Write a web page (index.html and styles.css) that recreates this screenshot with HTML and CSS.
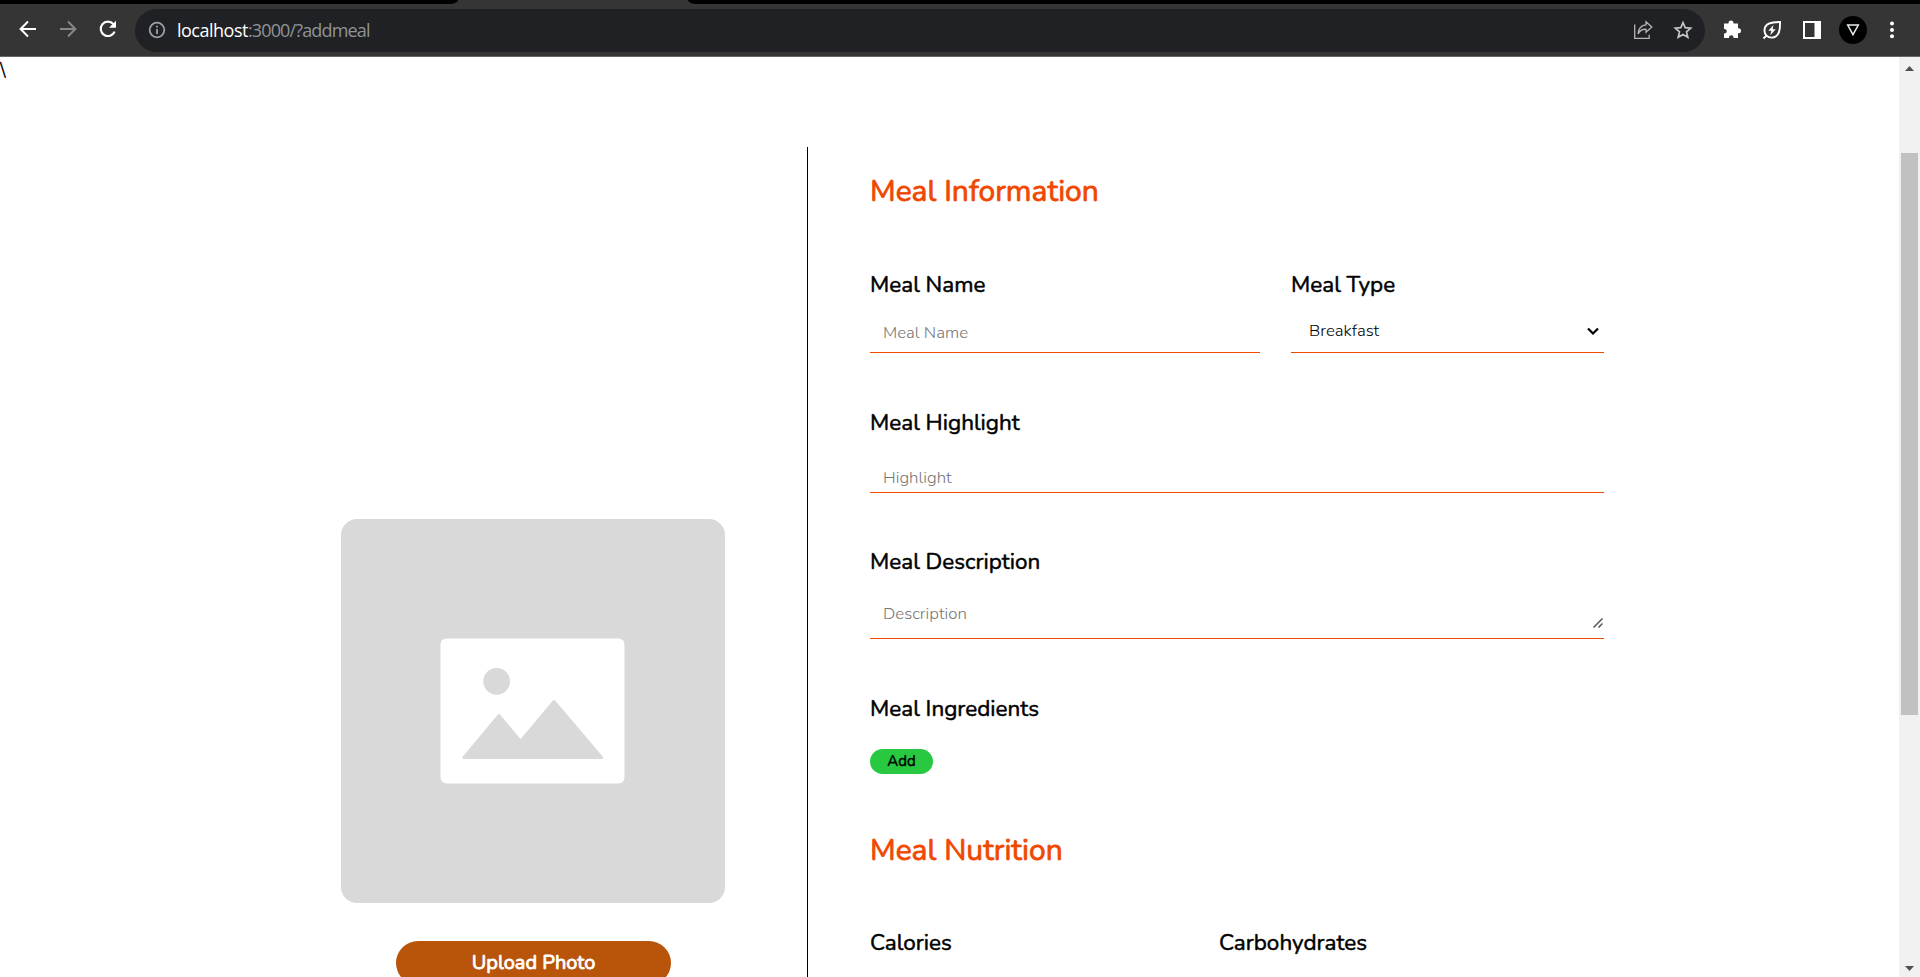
FILE: index.html
```html
<!DOCTYPE html>
<html lang="en">
<head>
<meta charset="utf-8">
<title>Add Meal</title>
<link rel="stylesheet" href="styles.css">
</head>
<body>
<div class="tabstrip"><span class="tab-left"></span><span class="tab-active"></span><span class="tab-right"></span></div>
<header class="toolbar">
  <svg class="nav" viewBox="0 0 20 20"><path d="M18 10H3M10 2.5 2.6 10l7.4 7.5" fill="none" stroke="#fff" stroke-width="2"/></svg>
  <svg class="nav" viewBox="0 0 20 20"><path d="M2 10h15M10 2.5l7.4 7.5-7.4 7.5" fill="none" stroke="#888" stroke-width="2"/></svg>
  <svg class="nav" viewBox="0 0 20 20"><path d="M16.6 12.6A7.2 7.2 0 1 1 15.3 5" fill="none" stroke="#fff" stroke-width="2.1"/><path d="M18 1.8v7h-7z" fill="#fff"/></svg>
  <div class="address">
    <svg class="info" viewBox="0 0 18 18"><circle cx="9" cy="9" r="7.3" fill="none" stroke="#9aa0a6" stroke-width="1.8"/><path d="M9 8v5M9 4.8v1.8" stroke="#9aa0a6" stroke-width="1.8"/></svg>
    <span class="url"><b>localhost</b>:3000/?addmeal</span>
    <svg class="share" viewBox="0 0 20 20"><path d="M1.7 4.5v13.8h14.5v-3.6" fill="none" stroke="#b5b5b5" stroke-width="1.3"/><path d="M13 1.8 18.8 7 13 12.2V9.3C9.500 9 7 10.500 5 13.800 5.500 8.500 8.500 5.300 13 4.900z" fill="none" stroke="#b5b5b5" stroke-width="1.3"/></svg>
    <svg class="star" viewBox="0 0 20 20"><path d="M10 2.600 12.200 7.700 17.700 8.200 13.500 11.900 14.800 17.300 10 14.400 5.200 17.300 6.500 11.900 2.300 8.200 7.800 7.700z" fill="none" stroke="#c4c4c4" stroke-width="1.700"/></svg>
  </div>
  <svg class="ext" viewBox="0 0 20 20"><path d="M2 3.500h4.500V3a2.500 2.500 0 1 1 5 0v.5h4.500v4.700h.5a2.500 2.500 0 1 1 0 5H16V18h-4.500v-.5a2.200 2.200 0 0 0-4.500 0v.5H2v-4.500h.5a2.200 2.200 0 0 0 0-4.500H2z" fill="#fff"/></svg>
  <svg class="ext" viewBox="0 0 20 20"><path d="M18 2c.3 7-.6 15.600-8.300 15.600A7 7 0 0 1 2.500 10.400C2.500 4 9 1.800 18 2zM1.500 18.500l3.200-3.200" fill="none" stroke="#fff" stroke-width="1.900"/><path d="M11.500 5 6.300 10.700h3l-1 4.500 5.400-6h-3.100z" fill="#fff"/></svg>
  <svg class="ext" viewBox="0 0 20 20"><path d="M2 2h16v16H2z" fill="none" stroke="#fff" stroke-width="2"/><path d="M12.500 2H18v16h-5.500z" fill="#fff"/></svg>
  <svg class="avatar" viewBox="0 0 28 28"><circle cx="14" cy="14" r="14"/><path d="M8.700 9h10.600L14 18.600z" fill="none" stroke="#e8eef0" stroke-width="1.500"/></svg>
  <svg class="more" viewBox="0 0 6 20"><g fill="#fff"><circle cx="3" cy="3.600" r="2"/><circle cx="3" cy="10" r="2"/><circle cx="3" cy="16.200" r="2"/></g></svg>
</header>
<main class="viewport">
  <div class="page">
    <div class="stray">\</div>
    <div class="columns">
      <section class="photo">
        <svg class="placeholder" viewBox="0 0 384 384"><rect width="384" height="384" rx="16" fill="#d9d9d9"/><rect x="99.500" y="119.500" width="184" height="145" rx="6" fill="#fff"/><circle cx="155.700" cy="162.300" r="13.400" fill="#d9d9d9"/><path d="m123 238.500 35-42 21.500 26 33.500-40 47.500 56z" fill="#d9d9d9" stroke="#d9d9d9" stroke-width="3" stroke-linejoin="round"/></svg>
        <button class="upload">Upload Photo</button>
      </section>
      <form class="form">
        <h2 class="title">Meal Information</h2>
        <div class="pair">
          <div class="field name"><label>Meal Name</label><div class="control">Meal Name</div></div>
          <div class="field type"><label>Meal Type</label><div class="control">Breakfast<svg class="chevron" viewBox="0 0 12 8"><path d="m1 1.500 5 5 5-5" fill="none" stroke="#000" stroke-width="2.200"/></svg></div></div>
        </div>
        <div class="field highlight"><label>Meal Highlight</label><div class="control">Highlight</div></div>
        <div class="field description"><label>Meal Description</label><div class="control">Description<svg class="grip" viewBox="0 0 10 10"><path d="M.5 9.500l9-9M5.500 9.500l4-4" stroke="#555" stroke-width="1.500"/></svg></div></div>
        <div class="field ingredients"><label>Meal Ingredients</label><button type="button" class="add">Add</button></div>
        <h2 class="title nutrition">Meal Nutrition</h2>
        <div class="macros"><label>Calories</label><label>Carbohydrates</label></div>
      </form>
    </div>
  </div>
  <div class="scrollbar"><svg class="up" viewBox="0 0 9 5"><path d="M0 5h9L4.500 0z" fill="#505050"/></svg><div class="thumb"></div><svg class="down" viewBox="0 0 9 5"><path d="M0 0h9L4.500 5z" fill="#505050"/></svg></div>
</main>
</body>
</html>
```
FILE: styles.css
```css
* { box-sizing: border-box; }
html, body { height: 100%; margin: 0; overflow: hidden; }
body { display: flex; flex-direction: column; background: #fff; color: #000; font-family: Nunito, Lato, sans-serif; }
svg { display: block; flex: none; }
button { border: 0; padding: 0; font-family: inherit; }

.tabstrip { display: flex; height: 4px; flex: none; background: #353535; }
.tab-left { width: 458px; background: #000; border-bottom-right-radius: 8px 4px; }
.tab-active { width: 230px; }
.tab-right { flex: 1; background: #000; border-bottom-left-radius: 8px 4px; }
.toolbar { display: flex; align-items: center; height: 53px; flex: none; padding: 0 18px 2px 18px; background: #353535; border-bottom: 1px solid #666; }
.nav { width: 20px; height: 20px; margin-right: 20px; }
.address { display: flex; align-items: center; flex: none; width: 1570px; height: 43px; margin: 2px 17px 0 -3px; padding: 0 12px 0 13px; border-radius: 22px; background: #202124; }
.info { width: 18px; height: 18px; margin-right: 11px; }
.url { flex: 1; font: 18px/24px "Open Sans", sans-serif; color: #8f9397; letter-spacing: -0.85px; }
.url b { font-weight: 400; color: #fff; letter-spacing: -0.5px; }
.share { width: 20px; height: 20px; margin-right: 20px; }
.star { width: 20px; height: 20px; }
.ext { width: 20px; height: 20px; margin: 1px 20px 0 0; }
.avatar { width: 28px; height: 28px; margin: 1px 22px 0 -3px; }
.more { width: 6px; height: 20px; margin-top: 1px; }

.viewport { display: flex; flex: 1; min-height: 0; }
.page { flex: 1; overflow: hidden; }
.stray { height: 90px; padding-top: 2px; font-size: 20px; line-height: 24px; }
.columns { display: flex; height: 830px; }
.photo { display: flex; flex-direction: column; align-items: flex-start; width: 808px; flex: none; padding: 372px 0 0 341px; border-right: 1px solid #000; }
.placeholder { width: 384px; height: 384px; }
.upload { width: 275px; height: 44px; flex: none; margin: 38px 0 0 55px; border-radius: 22px; background: #b9540b; color: #fff; font-size: 20px; line-height: 44px; -webkit-text-stroke: 0.8px #fff; }

.form { width: 796px; padding-left: 62px; }
.title { margin: 25px 0 0; font-size: 30px; line-height: 40px; font-weight: 400; color: #f04800; -webkit-text-stroke: 0.8px #f04800; }
.pair { display: flex; gap: 31px; margin-top: 58px; }
.name { width: 390px; }
.type { width: 313px; }
label { display: block; height: 30px; font-size: 22.5px; line-height: 30px; -webkit-text-stroke: 0.5px #000; }
.control { display: flex; align-items: center; padding-left: 13px; border-bottom: 1px solid #f04800; font-size: 16.8px; font-weight: 350; color: #757575; }
.name .control, .type .control { height: 53px; padding-top: 13px; }
.type .control { justify-content: space-between; padding: 9px 5px 0 18px; color: #000; }
.chevron { width: 12px; height: 8px; margin-top: 1px; }
.highlight { margin-top: 55px; }
.highlight .control { height: 55px; padding-top: 25px; }
.description { margin-top: 54px; }
.description .control { justify-content: space-between; height: 62px; padding: 12px 1px 0 13px; }
.grip { width: 10px; height: 10px; margin-top: 18px; }
.ingredients { margin-top: 55px; }
.add { display: block; width: 63px; height: 25px; margin-top: 25px; border-radius: 12.5px; background: #28c840; font-size: 15px; line-height: 25px; color: #000; -webkit-text-stroke: 0.4px #000; }
.nutrition { margin-top: 57px; }
.macros { display: grid; grid-template-columns: 349px 1fr; margin-top: 57px; }

.scrollbar { width: 21px; display: flex; flex-direction: column; align-items: center; background: #f1f1f1; padding: 9px 1px 6px 0; }
.up, .down { width: 9px; height: 5px; }
.thumb { width: 17px; height: 562px; margin-top: 82px; background: #c1c1c1; }
.down { margin-top: auto; }
```
